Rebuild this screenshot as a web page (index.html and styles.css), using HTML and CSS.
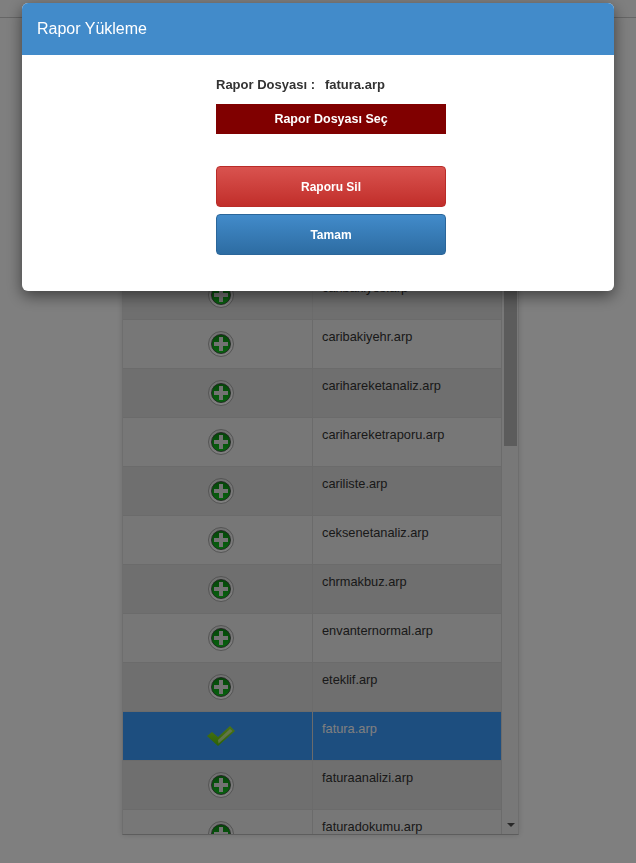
FILE: index.html
```html
<!DOCTYPE html>
<html lang="en">
<head>
    <meta charset="UTF-8">
    <meta name="viewport" content="width=device-width, initial-scale=1.0">
    <title>Rapor Yükleme</title>
    <link rel="stylesheet" href="styles.css">
</head>
<body>
    <svg class="icon-defs" width="0" height="0">
        <defs>
            <linearGradient id="plus-green" x1="0" y1="0" x2="0" y2="1">
                <stop offset="0" stop-color="#0a8c12"/>
                <stop offset="1" stop-color="#10c41e"/>
            </linearGradient>
            <linearGradient id="plus-ring" x1="0" y1="0" x2="0" y2="1">
                <stop offset="0" stop-color="#e0e0e0"/>
                <stop offset="1" stop-color="#ffffff"/>
            </linearGradient>
            <linearGradient id="check-green" x1="0" y1="0" x2="0" y2="1">
                <stop offset="0" stop-color="#9ae82c"/>
                <stop offset="1" stop-color="#58c40e"/>
            </linearGradient>
            <symbol id="icon-plus" viewBox="0 0 26 26">
                <circle cx="13" cy="13" r="12.500" fill="url(#plus-ring)" stroke="#a8a8a8"/>
                <circle cx="13" cy="13" r="9.500" fill="url(#plus-green)" stroke="#3c3c3c" stroke-width=".8"/>
                <path d="M11 6h4v5h5v4h-5v5h-4v-5H6v-4h5z" fill="#e4e4e4"/>
            </symbol>
            <symbol id="icon-check" viewBox="0 0 28 20">
                <path d="M0 10l5-4 6 5L23 0l5 5-17 15z" fill="url(#check-green)"/>
                <path d="M11 14L23 3l2.500 2-14 12.500z" fill="#f0f6e0" opacity=".6"/>
            </symbol>
        </defs>
    </svg>

    <div class="top-bar"></div>

    <div class="file-panel">
        <div class="file-list">
            <div class="file-row"><div class="file-state"><svg class="plus"><use href="#icon-plus"/></svg></div><div class="file-name">caribakiyes.arp</div></div>
            <div class="file-row"><div class="file-state"><svg class="plus"><use href="#icon-plus"/></svg></div><div class="file-name">caribakiyehr.arp</div></div>
            <div class="file-row"><div class="file-state"><svg class="plus"><use href="#icon-plus"/></svg></div><div class="file-name">carihareketanaliz.arp</div></div>
            <div class="file-row"><div class="file-state"><svg class="plus"><use href="#icon-plus"/></svg></div><div class="file-name">carihareketraporu.arp</div></div>
            <div class="file-row"><div class="file-state"><svg class="plus"><use href="#icon-plus"/></svg></div><div class="file-name">cariliste.arp</div></div>
            <div class="file-row"><div class="file-state"><svg class="plus"><use href="#icon-plus"/></svg></div><div class="file-name">ceksenetanaliz.arp</div></div>
            <div class="file-row"><div class="file-state"><svg class="plus"><use href="#icon-plus"/></svg></div><div class="file-name">chrmakbuz.arp</div></div>
            <div class="file-row"><div class="file-state"><svg class="plus"><use href="#icon-plus"/></svg></div><div class="file-name">envanternormal.arp</div></div>
            <div class="file-row"><div class="file-state"><svg class="plus"><use href="#icon-plus"/></svg></div><div class="file-name">eteklif.arp</div></div>
            <div class="file-row selected"><div class="file-state"><svg class="check"><use href="#icon-check"/></svg></div><div class="file-name">fatura.arp</div></div>
            <div class="file-row"><div class="file-state"><svg class="plus"><use href="#icon-plus"/></svg></div><div class="file-name">faturaanalizi.arp</div></div>
            <div class="file-row"><div class="file-state"><svg class="plus"><use href="#icon-plus"/></svg></div><div class="file-name">faturadokumu.arp</div></div>
        </div>
        <div class="scrollbar">
            <div class="scroll-thumb"></div>
            <div class="scroll-arrow"></div>
        </div>
    </div>

    <div class="backdrop"></div>

    <div class="modal">
        <div class="modal-header">Rapor Yükleme</div>
        <div class="modal-body">
            <div class="report-file">
                <span>Rapor Dosyası :</span>
                <span>fatura.arp</span>
            </div>
            <button class="choose-btn">Rapor Dosyası Seç</button>
            <button class="action-btn btn-red">Raporu Sil</button>
            <button class="action-btn btn-blue">Tamam</button>
        </div>
    </div>
</body>
</html>
```

FILE: styles.css
```css
body {
    font-family: "Liberation Sans", Arial, sans-serif;
    margin: 0;
    height: 863px;
    overflow: hidden;
    background: white;
    color: #333;
}

.icon-defs {
    position: absolute;
}

.top-bar {
    height: 17px;
    border-bottom: 1px solid #ccc;
}

.file-panel {
    display: flex;
    width: 395px;
    height: 563px;
    margin: 253px 0 0 122px;
    border: 1px solid #ddd;
    border-top: 0;
    border-bottom-color: #bbb;
    box-shadow: 0 0 6px rgba(0, 0, 0, 0.15);
    overflow: hidden;
}

.file-list {
    width: 378px;
    overflow: hidden;
}

.file-row {
    display: flex;
    height: 48px;
    border-bottom: 1px solid #d6d6d6;
}

.file-row:nth-child(even) {
    background: #eeeeee;
}

.file-row:nth-child(odd) {
    background: #dedede;
}

.file-row.selected {
    background: #3a9cff;
    color: #fff;
}

.file-state {
    display: flex;
    align-items: center;
    justify-content: center;
    width: 182px;
    padding-left: 7px;
    border-right: 1px solid #d6d6d6;
}

.file-name {
    flex: 1;
    padding: 10px 9px;
    font-size: 12.8px;
    line-height: 14px;
}

.plus {
    width: 26px;
    height: 26px;
}

.check {
    width: 28px;
    height: 20px;
}

.scrollbar {
    display: flex;
    flex-direction: column;
    justify-content: space-between;
    flex: 1;
    padding: 0 1px 0 2px;
    background: #f1f1f1;
    border-left: 1px solid #d6d6d6;
}

.scroll-thumb {
    height: 175px;
    background: #b8b8b8;
}

.scroll-arrow {
    width: 0;
    margin: 0 0 7px 3px;
    border: 4px solid transparent;
    border-top-color: #505050;
    border-bottom: 0;
}

.backdrop {
    position: fixed;
    inset: 0;
    background: rgba(0, 0, 0, 0.5);
}

.modal {
    position: fixed;
    top: 3px;
    left: 22px;
    width: 592px;
    height: 288px;
    background: white;
    border-radius: 6px;
    box-shadow: 0 5px 15px rgba(0, 0, 0, 0.5);
    overflow: hidden;
}

.modal-header {
    height: 52px;
    padding-left: 15px;
    line-height: 52px;
    font-size: 16px;
    color: white;
    background: #428bca;
}

.modal-body {
    display: flex;
    flex-direction: column;
    width: 230px;
    margin-left: 194px;
    padding-top: 21px;
}

.report-file {
    display: flex;
    gap: 10px;
    font-size: 13px;
    font-weight: bold;
    line-height: 18px;
    height: 28px;
}

button {
    font-family: inherit;
    font-size: 12px;
    font-weight: bold;
    color: white;
    padding: 0;
}

.choose-btn {
    height: 30px;
    margin-bottom: 32px;
    border: 0;
    font-size: 12.5px;
    background: #800000;
}

.action-btn {
    height: 41px;
    margin-bottom: 7px;
    border-radius: 4px;
    border: 1px solid;
}

.btn-red {
    background: linear-gradient(#d9534f, #c12e2a);
    border-color: #b92c28;
}

.btn-blue {
    background: linear-gradient(#428bca, #2d6ca2);
    border-color: #2b669a;
}
```
